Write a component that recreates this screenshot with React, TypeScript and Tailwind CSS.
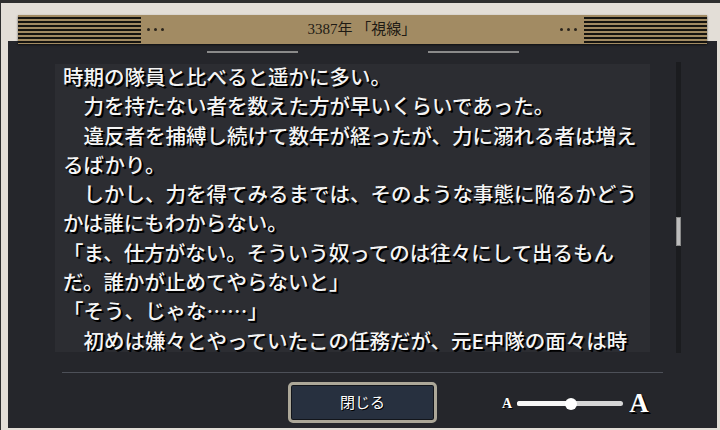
import React from "react";

const lines = [
  "時期の隊員と比べると遥かに多い。",
  "　力を持たない者を数えた方が早いくらいであった。",
  "　違反者を捕縛し続けて数年が経ったが、力に溺れる者は増え",
  "るばかり。",
  "　しかし、力を得てみるまでは、そのような事態に陥るかどう",
  "かは誰にもわからない。",
  "「ま、仕方がない。そういう奴ってのは往々にして出るもん",
  "だ。誰かが止めてやらないと」",
  "「そう、じゃな……」",
  "　初めは嫌々とやっていたこの任務だが、元E中隊の面々は時",
];

function Dots() {
  return (
    <div className="flex items-center gap-[4px]">
      <span className="w-[3px] h-[3px] rounded-full bg-[#2a241c]" />
      <span className="w-[3px] h-[3px] rounded-full bg-[#2a241c]" />
      <span className="w-[3px] h-[3px] rounded-full bg-[#2a241c]" />
    </div>
  );
}

function Stripes() {
  return (
    <div className="w-[123px] h-full bg-[repeating-linear-gradient(to_bottom,#a28b63_0px,#a28b63_2px,#16140f_2px,#16140f_4px)]" />
  );
}

export default function App() {
  return (
    <div className="w-[720px] h-[430px] bg-[#2e2e2e] pt-[3px] overflow-hidden">
      <div className="ml-[1px] h-[427px] bg-[#e3ded7] pl-[7px] pr-[3px] pt-[12px] pb-[2px] flex flex-col">
        {/* Header */}
        <div className="relative z-10 mx-[10px] h-[29px] bg-[#a28b63] flex items-center shadow-[0_1px_2px_rgba(0,0,0,0.6)]">
          <Stripes />
          <div className="ml-[6px]">
            <Dots />
          </div>
          <div className="flex-1 text-center text-[15px] text-[#1e1a14] font-['Liberation_Serif','Noto_Sans_CJK_JP',serif]">
            3387年 「視線」
          </div>
          <div className="mr-[7px]">
            <Dots />
          </div>
          <Stripes />
        </div>

        {/* Body */}
        <div className="-mt-[3px] flex-1 bg-[#25262b] flex flex-col">
          <div className="pt-[10px] flex justify-center gap-[130px]">
            <div className="w-[91px] h-[2px] bg-[#8a8a8a]" />
            <div className="w-[91px] h-[2px] bg-[#8a8a8a]" />
          </div>

          <div className="mt-[11px] h-[288px] flex">
            <div className="ml-[47px] w-[595px] h-full bg-[#2c2d32] overflow-hidden pl-[8px]">
              <div className="-mt-[2px] text-[20.5px] leading-[29.3px] text-[#f5f5f5] font-medium whitespace-nowrap font-['Noto_Sans_CJK_JP',sans-serif] [text-shadow:2px_2px_0_#000,1px_1px_1px_#000]">
                {lines.map((l, i) => (
                  <div key={i}>{l}</div>
                ))}
              </div>
            </div>
            <div className="ml-[26px] -mt-[2px] w-[5px] h-[291px] bg-[#1b1c1f] relative">
              <div className="absolute left-0 top-[155px] w-[5px] h-[29px] bg-[#bdbdbd] border border-[#8a8a8a]" />
            </div>
          </div>

          <div className="mt-[20px] mx-[54px] h-px bg-[#4d5058]" />

          <div className="mt-[9px] h-[41px] grid grid-cols-[1fr_auto_1fr]">
            <div />
            <button className="w-[149px] h-[41px] rounded-[5px] border-[3px] border-[#aca798] bg-[#27303f] shadow-[inset_0_0_0_1px_#12151b] text-white text-[15px] font-['Noto_Sans_CJK_JP',sans-serif] [text-shadow:1px_1px_0_#000]">
              閉じる
            </button>
            <div className="flex items-center pl-[65px] pt-[2px]">
              <span className="text-[14px] font-bold text-white font-['Liberation_Serif',serif] [text-shadow:1px_1px_0_#000]">
                A
              </span>
              <div className="ml-[5px] w-[106px] h-[5px] rounded-full bg-[#d6d6d6] relative">
                <div className="absolute left-0 top-0 h-[5px] w-[54px] rounded-full bg-[#f6f6f6]" />
                <div className="absolute left-[48px] -top-[3.5px] w-[12px] h-[12px] rounded-full bg-white" />
              </div>
              <span className="ml-[6px] text-[27px] leading-none font-bold text-white font-['Liberation_Serif',serif] [text-shadow:2px_2px_0_#000]">
                A
              </span>
            </div>
          </div>
        </div>
      </div>
    </div>
  );
}
